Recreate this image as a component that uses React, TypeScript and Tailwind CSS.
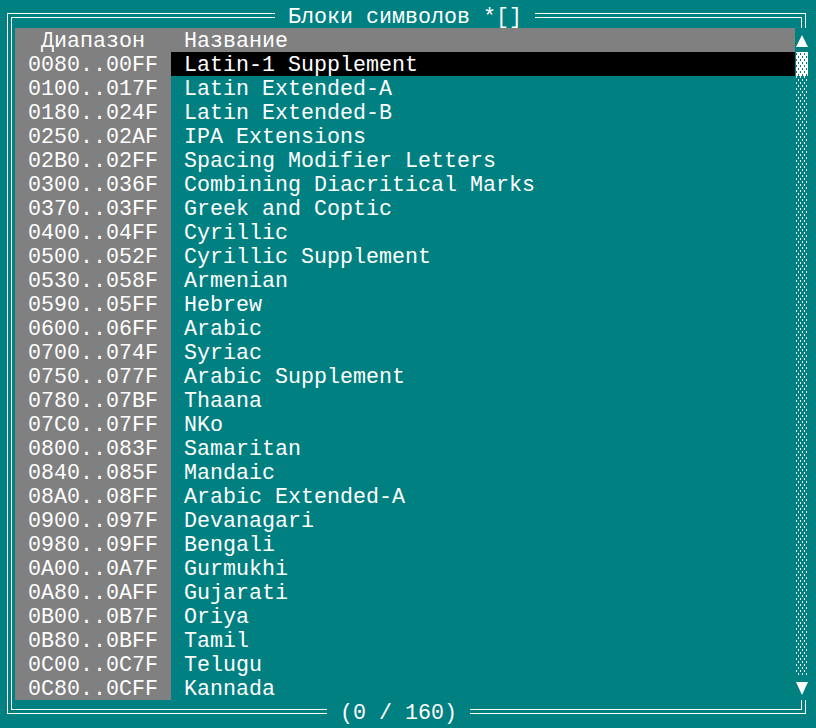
const rows: [string, string][] = [
  ["0080..00FF", "Latin-1 Supplement"],
  ["0100..017F", "Latin Extended-A"],
  ["0180..024F", "Latin Extended-B"],
  ["0250..02AF", "IPA Extensions"],
  ["02B0..02FF", "Spacing Modifier Letters"],
  ["0300..036F", "Combining Diacritical Marks"],
  ["0370..03FF", "Greek and Coptic"],
  ["0400..04FF", "Cyrillic"],
  ["0500..052F", "Cyrillic Supplement"],
  ["0530..058F", "Armenian"],
  ["0590..05FF", "Hebrew"],
  ["0600..06FF", "Arabic"],
  ["0700..074F", "Syriac"],
  ["0750..077F", "Arabic Supplement"],
  ["0780..07BF", "Thaana"],
  ["07C0..07FF", "NKo"],
  ["0800..083F", "Samaritan"],
  ["0840..085F", "Mandaic"],
  ["08A0..08FF", "Arabic Extended-A"],
  ["0900..097F", "Devanagari"],
  ["0980..09FF", "Bengali"],
  ["0A00..0A7F", "Gurmukhi"],
  ["0A80..0AFF", "Gujarati"],
  ["0B00..0B7F", "Oriya"],
  ["0B80..0BFF", "Tamil"],
  ["0C00..0C7F", "Telugu"],
  ["0C80..0CFF", "Kannada"],
];

const Scrollbar = () => (
  <div className="w-[13px] h-[672px] shrink-0 flex flex-col bg-[#008080]">
    <svg width="13" height="24" className="shrink-0">
      <polygon points="7,7 13,19 1,19" fill="#ffffff" />
    </svg>
    <svg width="13" height="24" className="shrink-0">
      <defs>
        <pattern id="dense" width="4" height="6" patternUnits="userSpaceOnUse">
          <rect width="4" height="6" fill="#ffffff" />
          <rect x="1" y="1" width="1" height="2" fill="#008080" />
          <rect x="3" y="4" width="1" height="2" fill="#008080" />
        </pattern>
      </defs>
      <rect x="1" y="0" width="12" height="24" fill="url(#dense)" />
    </svg>
    <svg width="13" height="600" className="shrink-0">
      <defs>
        <pattern id="light" width="4" height="6" patternUnits="userSpaceOnUse">
          <rect x="1" y="0" width="1" height="2" fill="#ffffff" />
          <rect x="3" y="3" width="1" height="2" fill="#ffffff" />
        </pattern>
      </defs>
      <rect x="1" y="0" width="12" height="600" fill="url(#light)" />
    </svg>
    <svg width="13" height="24" className="shrink-0">
      <polygon points="1,6 13,6 7,19" fill="#ffffff" />
    </svg>
  </div>
);

export default function App() {
  return (
    <div
      className="relative w-[816px] h-[728px] bg-[#008080] pt-[13px] pl-[7px] text-white text-[21.667px] leading-[20px] whitespace-pre"
      style={{ fontFamily: '"Liberation Mono", "DejaVu Sans Mono", monospace' }}
    >
      <div className="w-[799px] h-[701px] border border-white p-[3px]">
        <div className="w-[791px] h-[693px] border border-white pt-[10px] pl-[3px]">
          <div className="flex">
            <div className="w-[780px] shrink-0 flex flex-col">
              <div className="flex h-[24px] pt-[4px] bg-[#808080]">
                <div className="w-[156px] pl-[26px]">Диапазон</div>
                <div className="pl-[13px]">Название</div>
              </div>
              {rows.map(([range, name], i) => (
                <div key={range} className="flex h-[24px]">
                  <div className="w-[156px] h-[24px] pt-[4px] bg-[#808080] pl-[13px]">{range}</div>
                  <div className={`flex-1 h-[24px] pt-[4px] pl-[13px] ${i === 0 ? "bg-black" : ""}`}>{name}</div>
                </div>
              ))}
            </div>
            <Scrollbar />
          </div>
        </div>
      </div>

      <div className="absolute left-[275px] top-[4px] h-[24px] pt-[4px] bg-[#008080]"> Блоки символов *[] </div>
      <div className="absolute left-[327px] top-[700px] h-[24px] pt-[4px] bg-[#008080]"> (0 / 160) </div>
    </div>
  );
}
